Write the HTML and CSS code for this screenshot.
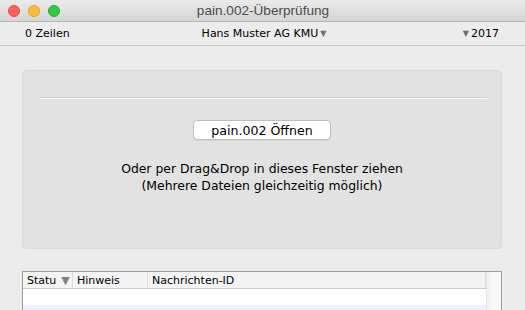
FILE: index.html
```html
<!DOCTYPE html>
<html lang="de">
<head>
<meta charset="utf-8">
<title>pain.002-Überprüfung</title>
<link rel="stylesheet" href="styles.css">
</head>
<body>
<div class="window">
  <header class="titlebar">
    <div class="lights">
      <span class="light red"></span>
      <span class="light yellow"></span>
      <span class="light green"></span>
    </div>
    <div class="title">pain.002-Überprüfung</div>
  </header>
  <div class="toolbar">
    <div class="tb-left">0 Zeilen</div>
    <div class="tb-center">Hans Muster AG KMU<span class="tri">▼</span></div>
    <div class="tb-right"><span class="tri">▼</span>2017</div>
  </div>
  <main class="content">
    <section class="panel">
      <div class="sep"></div>
      <button class="btn">pain.002 Öffnen</button>
      <p class="hint">Oder per Drag&amp;Drop in dieses Fenster ziehen<br>(Mehrere Dateien gleichzeitig möglich)</p>
    </section>
    <section class="table">
      <div class="table-main">
        <div class="thead">
          <div class="th c1">Statu<span class="sort">▼</span></div>
          <div class="th c2">Hinweis</div>
          <div class="th c3">Nachrichten-ID</div>
        </div>
        <div class="row"></div>
        <div class="row alt"></div>
      </div>
      <div class="scroll"></div>
    </section>
  </main>
</div>
</body>
</html>
```
FILE: styles.css
```css
* { box-sizing: border-box; }
html, body { margin: 0; padding: 0; }
body {
  width: 525px;
  height: 310px;
  overflow: hidden;
  background: #ececec;
  font-family: "DejaVu Sans", "Liberation Sans", sans-serif;
  color: #000;
}
.window { display: flex; flex-direction: column; height: 310px; }
.titlebar {
  position: relative;
  height: 22px;
  background: linear-gradient(#ebebeb, #d5d5d5);
  border-bottom: 1px solid #b4b4b4;
  display: flex;
  align-items: center;
  justify-content: center;
}
.lights {
  position: absolute;
  left: 8px;
  top: 5px;
  display: flex;
  gap: 8px;
}
.light { width: 12px; height: 12px; border-radius: 50%; display: block; }
.red { background: #fc605b; border: 1px solid #de4a44; }
.yellow { background: #fdbc40; border: 1px solid #dea235; }
.green { background: #34c84a; border: 1px solid #27aa35; }
.title {
  font-family: "Liberation Sans", sans-serif;
  font-size: 13.6px;
  color: #4c4c4c;
  padding-left: 1px;
}
.toolbar {
  height: 24px;
  background: #ececec;
  border-bottom: 1px solid #c9c9c9;
  display: grid;
  grid-template-columns: 1fr auto 1fr;
  align-items: center;
  font-size: 11px;
  padding: 0 26px 0 25px;
}
.tb-center { text-align: center; padding-left: 6px; }
.tb-right { text-align: right; }
.tri { color: #6e6e6e; font-size: 8px; vertical-align: 1px; margin: 0 2px; }
.content {
  flex: 1;
  padding: 24px 23px 0 22px;
  display: flex;
  flex-direction: column;
  gap: 22px;
}
.panel {
  height: 179px;
  background: #e2e2e2;
  border: 1px solid #d9d9d9;
  border-radius: 4px;
  display: flex;
  flex-direction: column;
  align-items: center;
}
.sep {
  align-self: stretch;
  margin: 26px 14px 0 16px;
  height: 2px;
  border-top: 1px solid #cdcdcd;
  border-bottom: 1px solid #fbfbfb;
}
.btn {
  margin-top: 21px;
  width: 138px;
  height: 20px;
  background: #fff;
  border: 1px solid #bdbdbd;
  border-radius: 4px;
  font-family: "DejaVu Sans", sans-serif;
  font-size: 12.6px;
  padding: 0;
  color: #000;
  box-shadow: 0 1px 0 rgba(0,0,0,0.05);
}
.hint {
  margin: 20px 0 0;
  text-align: center;
  font-size: 12.4px;
  line-height: 17px;
}
.table {
  flex: 1;
  display: flex;
  border: 1px solid #9d9d9d;
  border-bottom: none;
  background: #fff;
}
.table-main { flex: 1; display: flex; flex-direction: column; }
.thead {
  height: 17px;
  background: #f4f4f4;
  border-bottom: 1px solid #cbcbcb;
  display: flex;
  font-size: 11px;
  align-items: center;
}
.th { height: 100%; display: flex; align-items: center; padding-left: 4px; }
.c1 { width: 50px; border-right: 1px solid #dcdcdc; }
.c2 { width: 75px; border-right: 1px solid #dcdcdc; }
.c3 { flex: 1; border-right: 1px solid #dcdcdc; }
.sort { color: #808080; font-size: 11px; margin-left: 5px; }
.row { height: 16px; background: #fff; }
.row.alt { background: #edf3fe; flex: 1; }
.scroll {
  width: 15px;
  background: linear-gradient(90deg, #f0f0f0, #fafafa 40%, #f6f6f6);
  border-left: 1px solid #e6e6e6;
}
```
